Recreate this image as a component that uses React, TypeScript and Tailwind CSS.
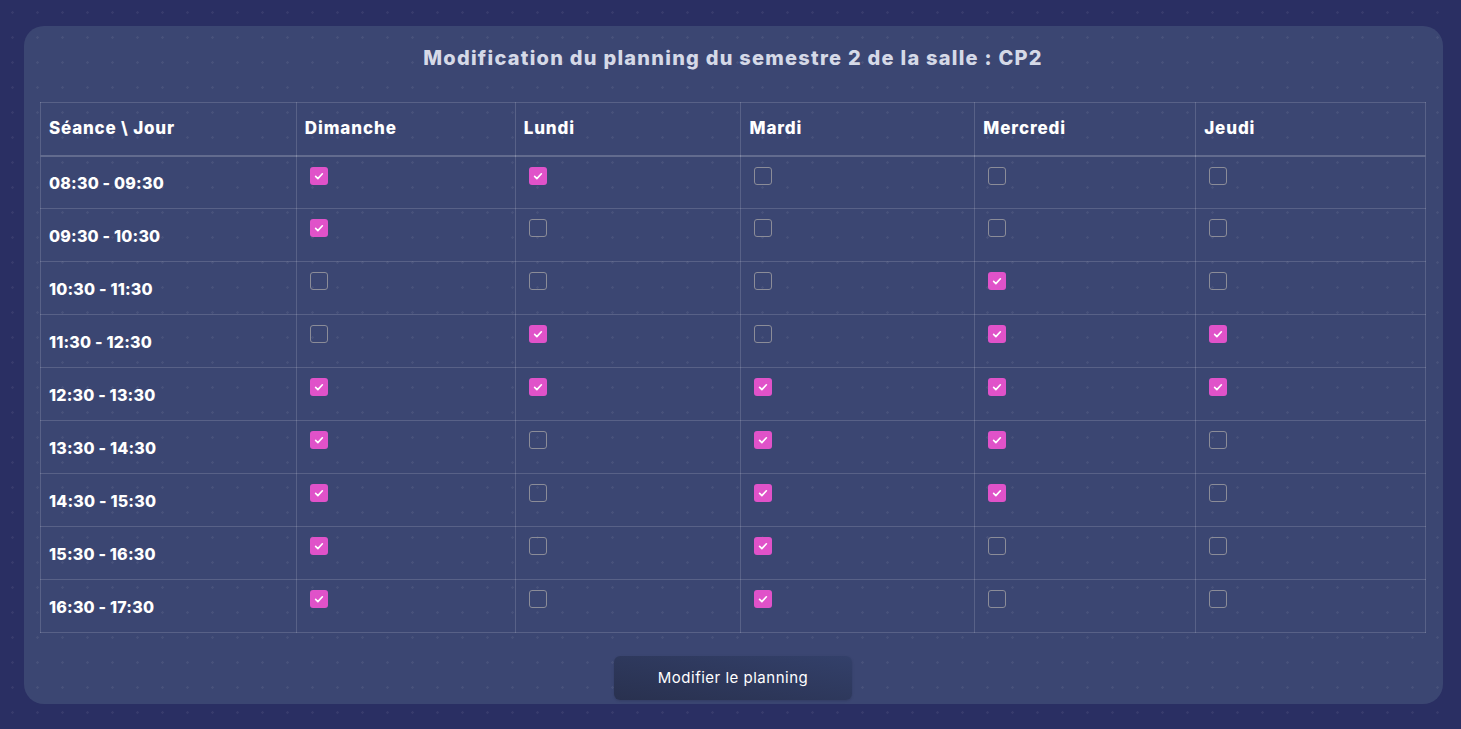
import { useState } from "react";

const DAYS = ["Dimanche", "Lundi", "Mardi", "Mercredi", "Jeudi"];

const SLOTS = [
  "08:30 - 09:30",
  "09:30 - 10:30",
  "10:30 - 11:30",
  "11:30 - 12:30",
  "12:30 - 13:30",
  "13:30 - 14:30",
  "14:30 - 15:30",
  "15:30 - 16:30",
  "16:30 - 17:30",
];

// rows = slots, cols = days
const INITIAL: boolean[][] = [
  [true, true, false, false, false],
  [true, false, false, false, false],
  [false, false, false, true, false],
  [false, true, false, true, true],
  [true, true, true, true, true],
  [true, false, true, true, false],
  [true, false, true, true, false],
  [true, false, true, false, false],
  [true, false, true, false, false],
];

const COL_WIDTHS = ["w-[256px]", "w-[219px]", "w-[226px]", "w-[234px]", "w-[221px]", "w-[230px]"];

function Checkbox({ checked, onChange }: { checked: boolean; onChange: () => void }) {
  return (
    <button
      type="button"
      onClick={onChange}
      className={
        checked
          ? "flex h-[18px] w-[18px] items-center justify-center rounded-[3px] bg-[#e052c9]"
          : "flex h-[18px] w-[18px] items-center justify-center rounded-[3px] border border-[#8b8c98]"
      }
    >
      {checked && (
        <svg viewBox="0 0 16 16" className="h-[12px] w-[12px]" fill="none" stroke="white" strokeWidth="2.2" strokeLinecap="round" strokeLinejoin="round">
          <path d="M3.5 8.5l3 3 6-6.5" />
        </svg>
      )}
    </button>
  );
}

export default function App() {
  const [grid, setGrid] = useState(INITIAL);

  const toggle = (r: number, c: number) => {
    setGrid(prev => prev.map((row, i) => (i === r ? row.map((v, j) => (j === c ? !v : v)) : row)));
  };

  const dots =
    "bg-[radial-gradient(rgba(255,255,255,0.06)_1px,transparent_1.5px)] bg-[size:25px_25px] bg-fixed";

  return (
    <div className={`min-h-[729px] bg-[#2a2f63] pt-[26px] pb-[25px] pl-[24px] font-['Inter','Noto_Sans',sans-serif] ${dots}`}>
      <div className={`w-[1419px] rounded-[20px] bg-[#3b4672] pt-[18px] pb-1 pl-4 pr-[17px] ${dots}`}>
        <h2 className="text-center text-[20px] font-extrabold leading-[28px] text-[#d5d9e7] tracking-[1.25px]">
          Modification du planning du semestre 2 de la salle : CP2
        </h2>

        <table className="mt-[30px] table-fixed border-collapse text-white">
          <thead>
            <tr className="h-[53px] border-b-2 border-white/20">
              <th className={`${COL_WIDTHS[0]} border border-white/15 pl-2 text-left text-[17px] font-extrabold tracking-[0.8px]`}>
                Séance \ Jour
              </th>
              {DAYS.map((d, i) => (
                <th key={d} className={`${COL_WIDTHS[i + 1]} border border-white/15 pl-2 text-left text-[17px] font-extrabold tracking-[0.9px]`}>
                  {d}
                </th>
              ))}
            </tr>
          </thead>
          <tbody>
            {SLOTS.map((slot, r) => (
              <tr key={slot} className="h-[53px]">
                <td className="border border-white/15 pl-2 pt-[2px] text-[16px] font-extrabold tracking-[0.2px]">{slot}</td>
                {DAYS.map((d, c) => (
                  <td key={d} className="border border-white/15 pt-[10px] pl-[13px] align-top">
                    <Checkbox checked={grid[r][c]} onChange={() => toggle(r, c)} />
                  </td>
                ))}
              </tr>
            ))}
          </tbody>
        </table>

        <div className="mt-[23px] flex justify-center">
          <button className="h-[44px] w-[238px] rounded-md bg-gradient-to-tr from-[#29314f] to-[#33406a] text-[15px] tracking-[0.5px] text-white shadow-sm">
            Modifier le planning
          </button>
        </div>
      </div>
    </div>
  );
}
